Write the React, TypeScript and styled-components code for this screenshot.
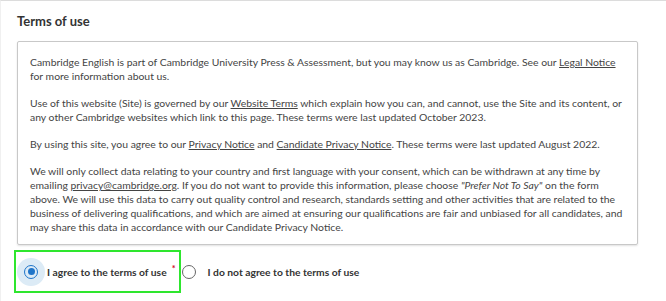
import React from "react";
import styled, { createGlobalStyle } from "styled-components";

const Global = createGlobalStyle`
  html, body { margin: 0; padding: 0; background: #fff; }
  body { font-family: Lato, "Liberation Sans", sans-serif; color: #333; }
`;

const Card = styled.section`
  width: 666px;
  height: 301px;
  box-sizing: border-box;
  border-top: 1px solid #dcdcdc;
  border-left: 1px solid #f0f0f0;
  padding: 11px 0 0 16px;
  overflow: hidden;
`;

const Title = styled.h2`
  margin: 0 0 11px;
  font-size: 13px;
  line-height: 18px;
  font-weight: 700;
  color: #333;
`;

const TermsBox = styled.div`
  width: 621px;
  box-sizing: border-box;
  border: 1px solid #c8c8c8;
  border-radius: 2px;
  box-shadow: 0 1px 2px rgba(0, 0, 0, 0.12);
  padding: 13px 12px 10px;
  font-size: 10.4px;
  line-height: 14px;
  color: #444;
`;

const Para = styled.p`
  margin: 0 0 13px;
  &:last-child { margin-bottom: 0; }
`;

const Link = styled.a`
  color: #444;
  text-decoration: underline;
`;

const Choices = styled.div`
  display: flex;
  align-items: center;
  margin: 5px 0 0 -3px;
`;

const Option = styled.label<{ $focused?: boolean }>`
  display: flex;
  align-items: center;
  height: 43px;
  box-sizing: border-box;
  border: ${(p) => (p.$focused ? "2px solid #2ee62e" : "none")};
  padding: ${(p) => (p.$focused ? "0 4px 0 1px" : "0")};
  margin-left: ${(p) => (p.$focused ? "0" : "-6px")};
  font-size: 10.3px;
  font-weight: 700;
  color: #333;
  gap: ${(p) => (p.$focused ? "2px" : "4px")};
`;

const Halo = styled.span<{ $active?: boolean }>`
  width: 28px;
  height: 28px;
  border-radius: 50%;
  display: flex;
  align-items: center;
  justify-content: center;
  background: ${(p) => (p.$active ? "#dcebf6" : "transparent")};
`;

const Radio = styled.span<{ $checked?: boolean }>`
  width: 14px;
  height: 14px;
  box-sizing: border-box;
  border-radius: 50%;
  border: 1.5px solid ${(p) => (p.$checked ? "#1f75c9" : "#666")};
  display: flex;
  align-items: center;
  justify-content: center;
  &::after {
    content: "";
    display: ${(p) => (p.$checked ? "block" : "none")};
    width: 7px;
    height: 7px;
    border-radius: 50%;
    background: #1f75c9;
  }
`;

const Required = styled.span`
  color: #d0021b;
  margin-left: 3px;
  font-size: 9px;
  align-self: flex-start;
  margin-top: 11px;
`;

export default function App() {
  return (
    <>
      <Global />
      <Card>
        <Title>Terms of use</Title>
        <TermsBox>
          <Para>
            Cambridge English is part of Cambridge University Press &amp; Assessment, but you may know us as Cambridge. See our{" "}
            <Link>Legal Notice</Link> for more information about us.
          </Para>
          <Para>
            Use of this website (Site) is governed by our <Link>Website Terms</Link> which explain how you can, and cannot, use the Site and its content, or any other Cambridge websites which link to this page. These terms were last updated October 2023.
          </Para>
          <Para>
            By using this site, you agree to our <Link>Privacy Notice</Link> and <Link>Candidate Privacy Notice</Link>. These terms were last updated August 2022.
          </Para>
          <Para>
            We will only collect data relating to your country and first language with your consent, which can be withdrawn at any time by emailing{" "}
            <Link>privacy@cambridge.org</Link>. If you do not want to provide this information, please choose <em>"Prefer Not To Say"</em> on the form above. We will use this data to carry out quality control and research, standards setting and other activities that are related to the business of delivering qualifications, and which are aimed at ensuring our qualifications are fair and unbiased for all candidates, and may share this data in accordance with our Candidate Privacy Notice.
          </Para>
        </TermsBox>
        <Choices>
          <Option $focused>
            <Halo $active>
              <Radio $checked />
            </Halo>
            I agree to the terms of use
            <Required>*</Required>
          </Option>
          <Option>
            <Halo>
              <Radio />
            </Halo>
            I do not agree to the terms of use
          </Option>
        </Choices>
      </Card>
    </>
  );
}
